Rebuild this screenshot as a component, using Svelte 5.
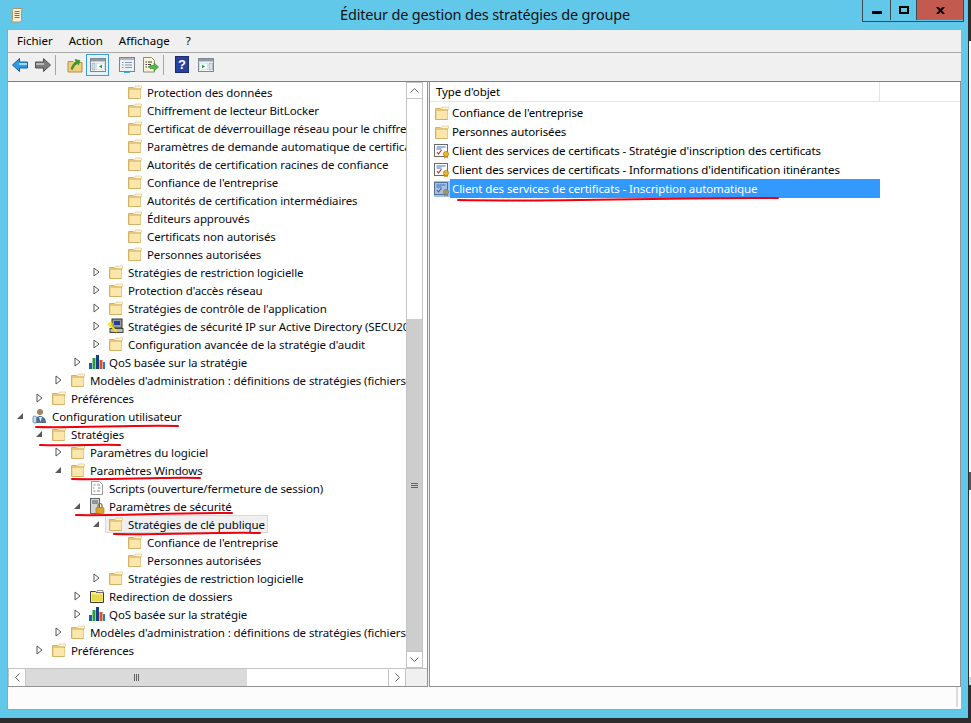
<script>
  const tree = [
    { d: 5, t: 'Protection des données' },
    { d: 5, t: 'Chiffrement de lecteur BitLocker' },
    { d: 5, t: 'Certificat de déverrouillage réseau pour le chiffrement' },
    { d: 5, t: 'Paramètres de demande automatique de certificat' },
    { d: 5, t: 'Autorités de certification racines de confiance' },
    { d: 5, t: "Confiance de l'entreprise" },
    { d: 5, t: 'Autorités de certification intermédiaires' },
    { d: 5, t: 'Éditeurs approuvés' },
    { d: 5, t: 'Certificats non autorisés' },
    { d: 5, t: 'Personnes autorisées' },
    { d: 4, t: 'Stratégies de restriction logicielle', a: 'c' },
    { d: 4, t: "Protection d'accès réseau", a: 'c' },
    { d: 4, t: "Stratégies de contrôle de l'application", a: 'c' },
    { d: 4, t: 'Stratégies de sécurité IP sur Active Directory (SECU2012)', a: 'c', i: 'ipsec' },
    { d: 4, t: "Configuration avancée de la stratégie d'audit", a: 'c' },
    { d: 3, t: 'QoS basée sur la stratégie', a: 'c', i: 'qos' },
    { d: 2, t: "Modèles d'administration : définitions de stratégies (fichiers ADMX)", a: 'c' },
    { d: 1, t: 'Préférences', a: 'c' },
    { d: 0, t: 'Configuration utilisateur', a: 'o', i: 'user' },
    { d: 1, t: 'Stratégies', a: 'o' },
    { d: 2, t: 'Paramètres du logiciel', a: 'c' },
    { d: 2, t: 'Paramètres Windows', a: 'o' },
    { d: 3, t: 'Scripts (ouverture/fermeture de session)', i: 'script' },
    { d: 3, t: 'Paramètres de sécurité', a: 'o', i: 'secu' },
    { d: 4, t: 'Stratégies de clé publique', a: 'o', sel: true },
    { d: 5, t: "Confiance de l'entreprise" },
    { d: 5, t: 'Personnes autorisées' },
    { d: 4, t: 'Stratégies de restriction logicielle', a: 'c' },
    { d: 3, t: 'Redirection de dossiers', a: 'c', i: 'redir' },
    { d: 3, t: 'QoS basée sur la stratégie', a: 'c', i: 'qos' },
    { d: 2, t: "Modèles d'administration : définitions de stratégies (fichiers ADMX)", a: 'c' },
    { d: 1, t: 'Préférences', a: 'c' }
  ];

  const list = [
    { t: "Confiance de l'entreprise", i: 'folder' },
    { t: 'Personnes autorisées', i: 'folder' },
    { t: "Client des services de certificats - Stratégie d'inscription des certificats", i: 'cert' },
    { t: "Client des services de certificats - Informations d'identification itinérantes", i: 'cert' },
    { t: 'Client des services de certificats - Inscription automatique', i: 'cert', sel: true }
  ];
</script>

{#snippet folder()}
  <svg class="ico" viewBox="0 0 16 16">
    <path d="M1.500 3.500h5l1 1h6v10h-12z" fill="#e8c877" stroke="#d3b268" />
    <path d="M2.500 6h11v8h-11z" fill="#fbe7ab" />
    <path d="M8 2h6.500v2.500h-6.500z" fill="#fff6d8" stroke="#dcc07a" stroke-width=".6" />
  </svg>
{/snippet}

{#snippet icon(kind)}
  {#if kind === 'qos'}
    <svg class="ico" viewBox="0 0 16 16">
      <rect x="0" y="9" width="3" height="6" fill="#1c5fb0" />
      <rect x="3.500" y="4" width="3" height="11" fill="#2a9a3c" />
      <rect x="7" y="1" width="3" height="14" fill="#163f86" />
      <rect x="10.500" y="6" width="3" height="9" fill="#d8552a" />
      <rect x="14" y="8" width="2" height="7" fill="#1c7fd0" />
    </svg>
  {:else if kind === 'ipsec'}
    <svg class="ico" viewBox="0 0 16 16">
      <rect x="4" y="1" width="10" height="9" fill="#9a9a9a" stroke="#333" />
      <rect x="6" y="3" width="6" height="4" fill="#1c3fa0" />
      <rect x="2" y="10.500" width="13" height="4" fill="#bdbdbd" stroke="#444" />
      <path d="M1 6l8 8" stroke="#f5e020" stroke-width="1.800" />
      <circle cx="2.500" cy="6.500" r="1.800" fill="none" stroke="#f5e020" stroke-width="1.200" />
    </svg>
  {:else if kind === 'user'}
    <svg class="ico" viewBox="0 0 16 16">
      <circle cx="8" cy="4" r="3" fill="#a8825c" />
      <path d="M3 15c0-5 2-7 5-7s6 2 6 7z" fill="#4f6f96" />
      <rect x="1" y="8" width="3.500" height="7" rx="1.500" fill="#c9dcec" stroke="#5a7ea2" stroke-width=".8" />
      <path d="M7 9l1.500 5 1.500-5z" fill="#e9eef3" />
    </svg>
  {:else if kind === 'script'}
    <svg class="ico" viewBox="0 0 16 16">
      <path d="M2.500 1.500h8l3 3v10h-11z" fill="#fff" stroke="#9b9b9b" />
      <path d="M4.500 5h2M8 5h3M4 8h1.500M9 8h2.500M4.500 11h2M8 11h3" stroke="#7d8794" />
    </svg>
  {:else if kind === 'secu'}
    <svg class="ico" viewBox="0 0 16 16">
      <rect x="1.500" y="0.500" width="9" height="15" fill="#d3d7da" stroke="#5d6368" />
      <path d="M3 3h6M3 5h6" stroke="#4c5358" />
      <rect x="7" y="9.500" width="8" height="6" rx="1" fill="#dca52c" stroke="#9a6b12" stroke-width=".6" />
      <path d="M9 9.500v-2a2 2 0 0 1 4 0v2" fill="none" stroke="#8a6a28" stroke-width="1.200" />
    </svg>
  {:else if kind === 'redir'}
    <svg class="ico" viewBox="0 0 16 16">
      <path d="M1.500 3.500h5l1 1h7v10h-13z" fill="#f7ec8e" stroke="#3d3d3d" />
      <path d="M3 6.500h10.500v6.500h-10.500z" fill="#e8d94a" />
      <path d="M8 2.500h6v2h-6z" fill="#ffffff" stroke="#555" stroke-width=".6" />
    </svg>
  {:else if kind === 'cert'}
    <svg class="ico" viewBox="0 0 16 16">
      <rect x="0.500" y="1.500" width="13" height="12" fill="#fdfdfd" stroke="#6a6a6a" />
      <path d="M2.500 4h9M2.500 6h5" stroke="#3f72c8" />
      <path d="M3 9l1.500 2 3-4" fill="none" stroke="#c0392b" stroke-width="1.200" />
      <circle cx="12" cy="11" r="2.600" fill="#e9b32e" stroke="#a67b14" stroke-width=".6" />
      <path d="M10.500 13l-.5 2.500 2-1 2 1-.5-2.500z" fill="#c98f1a" />
    </svg>
  {:else}
    {@render folder()}
  {/if}
{/snippet}

<div class="page">
  <div class="desktop-strip">
    <div class="strip-a"></div>
    <div class="strip-b"></div>
    <div class="strip-c"></div>
    <div class="strip-d"></div>
  </div>

  <div class="window">
    <header class="titlebar">
      <svg class="app-icon" viewBox="0 0 16 16">
        <path d="M4 1.500h9.500c-1 1-1 2-1 3v8c0 1.500-1 2.500-2 2.500h-8.500c1-.5 1.500-1.500 1.500-2.500v-8c0-1.500 0-3 .5-3z" fill="#f7efd0" stroke="#a89a6a" />
        <path d="M5.500 4.500h5M5.500 6.500h5M5.500 8.500h5M5.500 10.500h5" stroke="#77705a" />
      </svg>
      <div class="title">Éditeur de gestion des stratégies de groupe</div>
      <div class="caption">
        <div class="cap-btn min"><span></span></div>
        <div class="cap-btn max"><span></span></div>
        <div class="cap-btn close">
          <svg viewBox="0 0 9 7" width="9" height="7"><path d="M0 0h2.500l2 2 2-2h2.500l-3 3.500 3 3.500h-2.500l-2-2-2 2h-2.500l3-3.500z" fill="#000" /></svg>
        </div>
      </div>
    </header>

    <div class="client">
      <nav class="menubar">
        <span>Fichier</span><span>Action</span><span>Affichage</span><span>?</span>
      </nav>

      <div class="toolbar">
        <svg class="tb arrow" viewBox="0 0 16 14"><path d="M.5 7l7-6.500v3.500h8v6h-8v3.500z" fill="#2f9be4" stroke="#16609e" /><path d="M7 5h8v2h-8z" fill="#9fd8fb" /></svg>
        <svg class="tb arrow next" viewBox="0 0 16 14"><path d="M15.500 7l-7-6.500v3.500h-8v6h8v3.500z" fill="#7d7d7d" stroke="#4f4f4f" /><path d="M1 5h8v2h-8z" fill="#b9b9b9" /></svg>
        <i class="sep"></i>
        <svg class="tb up" viewBox="0 0 16 16">
          <path d="M1 4.500h5l1 1h8v9.500h-14z" fill="#f0cf80" stroke="#b58f3e" />
          <path d="M4 12c1-4 3-6 5-7l-1-2.500 5 1-1.500 4.500-1-1.500c-2 1-4 3-5 6z" fill="#3a9f2c" stroke="#24761a" stroke-width=".5" />
        </svg>
        <div class="tb-active">
          <svg viewBox="0 0 16 14" width="16" height="14">
            <rect x=".5" y=".5" width="15" height="13" fill="#fff" stroke="#7b8a96" />
            <path d="M1 1h14v2.500h-14z" fill="#8d99a3" />
            <path d="M2 5h3v7h-3z" fill="#d2e2ef" stroke="#7b8a96" stroke-width=".5" />
            <path d="M6.500 5h8v7h-8z" fill="#f7fafc" stroke="#b4bec6" stroke-width=".5" />
            <path d="M12 6.500v4l-3-2z" fill="#2fa83d" />
          </svg>
        </div>
        <svg class="tb prop" viewBox="0 0 16 16">
          <rect x=".5" y=".5" width="15" height="14" fill="#eef0f2" stroke="#7b858e" />
          <path d="M1 1h14v2h-14z" fill="#aeb7be" />
          <path d="M3 5.500h1.500M6 5.500h7M3 8h1.500M6 8h7M3 10.500h1.500M6 10.500h7" stroke="#7f9cb8" />
          <path d="M5 15h6v1h-6z" fill="#2fb0e0" />
        </svg>
        <svg class="tb export" viewBox="0 0 17 16">
          <path d="M1.500 .5h8l3 3v11.500h-11z" fill="#faf5d8" stroke="#8d8a70" />
          <path d="M3.500 5h1.500M6 5h4M3.500 7.500h1.500M6 7.500h3M3.500 10h1.500M6 10h2" stroke="#3b3b3b" />
          <path d="M8 8.500h4v-2.500l4.500 4-4.500 4v-2.500h-4z" fill="#55b84a" stroke="#2d8a28" stroke-width=".6" />
        </svg>
        <i class="sep second"></i>
        <div class="help">?</div>
        <svg class="tb tree-btn" viewBox="0 0 16 14">
          <rect x=".5" y=".5" width="15" height="13" fill="#fff" stroke="#7b8a96" />
          <path d="M1 1h14v2.500h-14z" fill="#8d99a3" />
          <path d="M1.500 5h8v7h-8z" fill="#f7fafc" stroke="#b4bec6" stroke-width=".5" />
          <path d="M4 6.500v4l3-2z" fill="#2fa83d" />
          <path d="M11 5h3.500v7h-3.500z" fill="#d2e2ef" stroke="#7b8a96" stroke-width=".5" />
        </svg>
      </div>

      <div class="panes">
        <section class="tree-pane">
          <div class="tree-top">
            <div class="tree">
              {#each tree as row}
                <div class="row" style="padding-left: {5 + 19 * row.d}px">
                  <span class="twisty">
                    {#if row.a === 'c'}
                      <svg viewBox="0 0 7 10" width="7" height="10"><path d="M1 1l5 4-5 4z" fill="#fff" stroke="#555" /></svg>
                    {:else if row.a === 'o'}
                      <svg viewBox="0 0 8 8" width="8" height="8"><path d="M7 1v6h-6z" fill="#595959" /></svg>
                    {/if}
                  </span>
                  <span class="node" class:sel={row.sel}>
                    {@render icon(row.i)}
                    <span class="label">{row.t}</span>
                  </span>
                </div>
              {/each}
            </div>
            <div class="vscroll">
              <div class="sb-btn"><svg viewBox="0 0 9 5" width="9" height="5"><path d="M.5 4.500l4-4 4 4" fill="none" stroke="#606060" /></svg></div>
              <div class="v-track"></div>
              <div class="v-thumb"><b></b><b></b><b></b></div>
              <div class="sb-btn"><svg viewBox="0 0 9 5" width="9" height="5"><path d="M.5 .5l4 4 4-4" fill="none" stroke="#606060" /></svg></div>
            </div>
          </div>
          <div class="hscroll">
            <div class="sb-btn h"><svg viewBox="0 0 5 9" width="5" height="9"><path d="M4.500 .5l-4 4 4 4" fill="none" stroke="#606060" /></svg></div>
            <div class="h-thumb"><b></b><b></b><b></b></div>
            <div class="h-track"></div>
            <div class="sb-btn h"><svg viewBox="0 0 5 9" width="5" height="9"><path d="M.5 .5l4 4-4 4" fill="none" stroke="#606060" /></svg></div>
            <div class="corner"></div>
          </div>
        </section>

        <section class="list-pane">
          <div class="list-head">
            <div class="col">Type d'objet</div>
          </div>
          <div class="list">
            {#each list as item}
              <div class="item">
                <span class="item-icon" class:dim={item.sel}>{@render icon(item.i)}</span>
                <span class="item-text" class:selected={item.sel}>{item.t}</span>
              </div>
            {/each}
          </div>
        </section>
      </div>

      <footer class="status"><i></i></footer>
    </div>
  </div>

  <svg class="marks" viewBox="0 0 971 723" width="971" height="723">
    <g fill="none" stroke="#f0000f" stroke-width="2" stroke-linecap="round">
      <path d="M36 427C80 428 130 425 178 426" />
      <path d="M40 445C70 446 100 444 120 445" />
      <path d="M72 479C110 480 160 477 200 478" />
      <path d="M76 515C120 516 190 512 232 513" />
      <path d="M114 534C160 535 220 532 260 533" />
      <path d="M458 200C560 202 680 197 778 198" />
    </g>
  </svg>
</div>

<style>
  :global(body) { margin: 0; background: #2d2d2d; }
  .page { position: relative; width: 971px; height: 723px; overflow: hidden; background: #2d2d2d; font-family: "Noto Sans", sans-serif; font-size: 11.500px; letter-spacing: -.1px; color: #000; }

  .desktop-strip { position: absolute; left: 969px; top: 41px; width: 2px; display: flex; flex-direction: column; }
  .strip-a { height: 431px; background: #fdfdfd; }
  .strip-b { height: 18px; background: #555; }
  .strip-c { height: 187px; background: #fbfbfb; }
  .strip-d { height: 8px; background: #c4dbe2; }

  .window { width: 968px; height: 718px; background: #62c8ea; box-sizing: border-box; padding: 0 6px 8px 7px; border-right: 1px solid #62c8ea; display: flex; flex-direction: column; }

  .titlebar { height: 29px; flex: none; display: flex; align-items: flex-start; position: relative; }
  .app-icon { width: 16px; height: 16px; margin: 7px 0 0 2px; }
  .title { position: absolute; left: 333px; top: 4px; width: 288px; text-align: center; white-space: nowrap; font-size: 14.500px; letter-spacing: -.17px; line-height: 21px; color: #111; }
  .caption { margin-left: auto; margin-right: -3px; display: flex; height: 21px; border: solid #3c4a50; border-width: 0 1px 1px 1px; }
  .cap-btn { height: 20px; display: flex; align-items: center; justify-content: center; }
  .min { width: 27px; border-right: 1px solid #3c4a50; }
  .min span { width: 10px; height: 3px; background: #000; margin-top: 5px; }
  .max { width: 25px; border-right: 1px solid #3c4a50; }
  .max span { width: 6px; height: 4px; border: 2px solid #000; margin-top: -1px; }
  .close { width: 46px; background: #c25a50; }

  .client { flex: 1; min-height: 0; display: flex; flex-direction: column; background: #f0f0f0; border-left: 1px solid #9ea3a6; }
  .menubar { height: 22px; flex: none; box-sizing: content-box; display: flex; align-items: center; border-bottom: 1px solid #a9a9a9; padding: 0 0 0 9px; gap: 16px; border-top: 1px solid #a4a9ac; letter-spacing: 0; }
  .menubar span { position: relative; top: -1px; }
  .toolbar { height: 29px; flex: none; display: flex; align-items: center; padding-left: 4px; border-bottom: 1px solid #7d8285; box-sizing: border-box; padding-bottom: 5px; }
  .tb { display: block; }
  .arrow { width: 16px; height: 14px; }
  .next { margin-left: 7px; }
  .sep { width: 1px; height: 20px; background: #a5a5a5; margin: 0 11px 0 4px; }
  .up { width: 16px; height: 16px; }
  .tb-active { width: 23px; height: 22px; box-sizing: border-box; margin-left: 3px; border: 1px solid #3d9de0; background: #e6f1fa; display: flex; align-items: center; justify-content: center; }
  .prop { width: 16px; height: 16px; margin-left: 10px; }
  .export { width: 17px; height: 16px; margin-left: 7px; }
  .sep.second { margin: 0 11px 0 4px; }
  .help { width: 14px; height: 17px; background: #28419c; border: 1px solid #1b2c70; box-sizing: border-box; color: #fff; font: bold 13px/15px "Liberation Sans", sans-serif; text-align: center; }
  .tree-btn { width: 16px; height: 14px; margin-left: 9px; }

  .panes { flex: 1; min-height: 0; display: flex; }
  .tree-pane { width: 420px; flex: none; display: flex; flex-direction: column; background: #fff; border-right: 1px solid #8f9396; border-bottom: 1px solid #8f9396; box-sizing: border-box; }
  .tree-top { flex: 1; min-height: 0; display: flex; }
  .tree { width: 398px; flex: none; overflow: hidden; padding-top: 1px; }
  .row { height: 18px; display: flex; align-items: center; white-space: nowrap; }
  .twisty { width: 14px; flex: none; display: flex; justify-content: center; margin-right: 2px; }
  .ico { width: 16px; height: 16px; flex: none; display: block; }
  .node { height: 18px; box-sizing: border-box; display: flex; align-items: center; padding: 0 2px; border: 1px solid transparent; }
  .node.sel { background: #f0f0f0; border-color: #d9d9d9; }
  .label { margin-left: 4px; color: #0a0a14; }

  .vscroll { width: 17px; flex: none; display: flex; flex-direction: column; border: solid #c4c4c4; border-width: 0 1px; background: #fff; box-sizing: border-box; }
  .sb-btn { height: 17px; flex: none; box-sizing: border-box; display: flex; align-items: center; justify-content: center; background: #fff; border: 1px solid #c4c4c4; margin: 0 -1px; }
  .v-track { height: 220px; flex: none; }
  .v-thumb { flex: 1; background: #cdcdcd; display: flex; flex-direction: column; gap: 1px; align-items: center; justify-content: center; }
  .v-thumb b { width: 7px; height: 1px; background: #606060; }
  .hscroll { height: 18px; flex: none; display: flex; border-top: 1px solid #c4c4c4; box-sizing: border-box; }
  .sb-btn.h { width: 18px; height: auto; margin: 0; border-width: 0 1px; }
  .h-thumb { width: 221px; flex: none; background: #dadada; display: flex; gap: 1px; align-items: center; justify-content: center; }
  .h-thumb b { width: 1px; height: 7px; background: #606060; }
  .h-track { flex: 1; }
  .corner { width: 21px; flex: none; background: #f0f0f0; }

  .list-pane { flex: 1; margin-left: 1px; background: #fff; border: 1px solid #8f9396; border-top: 0; display: flex; flex-direction: column; min-width: 0; }
  .list-head { height: 19px; flex: none; display: flex; border-bottom: 1px solid #e5e5e5; }
  .col { width: 450px; flex: none; box-sizing: border-box; padding: 1px 0 0 6px; border-right: 1px solid #e5e5e5; line-height: 18px; }
  .list { padding-top: 1px; }
  .item { height: 19px; display: flex; align-items: center; padding-left: 4px; white-space: nowrap; }
  .item-icon { display: block; position: relative; }
  .dim::after { content: ""; position: absolute; inset: 0; background: rgba(51, 120, 200, .45); }
  .item-text { flex: 1; box-sizing: border-box; padding: 1px 0 0 2px; line-height: 18px; height: 19px; max-width: 430px; }
  .item-text.selected { background: #3399ff; color: #fff; }

  .status { height: 23px; flex: none; background: #fcfcfc; display: flex; justify-content: flex-end; border-bottom: 1px solid #9ea3a6; box-sizing: border-box; }
  .status i { width: 2px; height: 20px; margin-right: 3px; background: #dcdcdc; }

  .marks { position: absolute; left: 0; top: 0; pointer-events: none; }
</style>
